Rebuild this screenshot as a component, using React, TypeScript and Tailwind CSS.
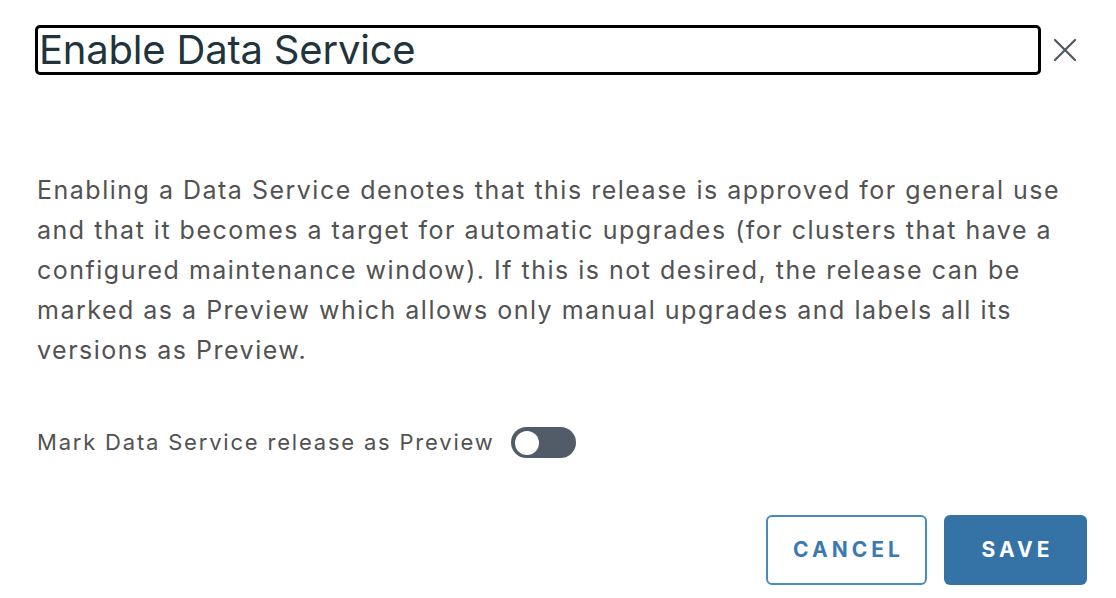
import React from 'react'

export default function App() {
  return (
    <div className="w-[1116px] h-[598px] bg-white overflow-hidden font-['Inter',sans-serif]">
      <div className="flex items-center pl-[35px] pt-[25px]">
        <div className="w-[1006px] h-[50px] border-[3px] border-black rounded-[5px] flex items-center pl-[1px]">
          <h1 className="text-[40px] leading-none text-[#21333b] tracking-[-0.2px]">Enable Data Service</h1>
        </div>
        <button className="ml-[11px] w-[26px] h-[26px] flex items-center justify-center text-[#4c5865]">
          <svg width="24" height="24" viewBox="0 0 24 24" fill="none" stroke="currentColor" strokeWidth="2.2" strokeLinecap="round">
            <path d="M2 2 L22 22 M22 2 L2 22" />
          </svg>
        </button>
      </div>

      <p className="mt-[95px] pl-[37px] text-[25px] leading-[40px] tracking-[1.5px] text-[#525252] whitespace-nowrap">
        Enabling a Data Service denotes that this release is approved for general use
        <br />
        and that it becomes a target for automatic upgrades (for clusters that have a
        <br />
        configured maintenance window). If this is not desired, the release can be
        <br />
        marked as a Preview which allows only manual upgrades and labels all its
        <br />
        versions as Preview.
      </p>

      <div className="mt-[57px] pl-[37px] flex items-center h-[31px]">
        <span className="text-[22px] tracking-[1.8px] text-[#525252]">Mark Data Service release as Preview</span>
        <div className="ml-[16px] w-[65px] h-[31px] rounded-full bg-[#525c68] flex items-center pl-[4px]">
          <div className="w-[24px] h-[24px] rounded-full bg-white" />
        </div>
      </div>

      <div className="mt-[57px] flex justify-end pr-[29px] gap-[17px]">
        <button className="w-[161px] h-[70px] rounded-[6px] border-2 border-[#4a8bbf] text-[#3a7ab0] text-[21px] font-bold tracking-[4px] pl-[4px]">
          CANCEL
        </button>
        <button className="w-[143px] h-[70px] rounded-[6px] bg-[#3573a7] text-white text-[21px] font-bold tracking-[4px] pl-[4px]">
          SAVE
        </button>
      </div>
    </div>
  )
}
